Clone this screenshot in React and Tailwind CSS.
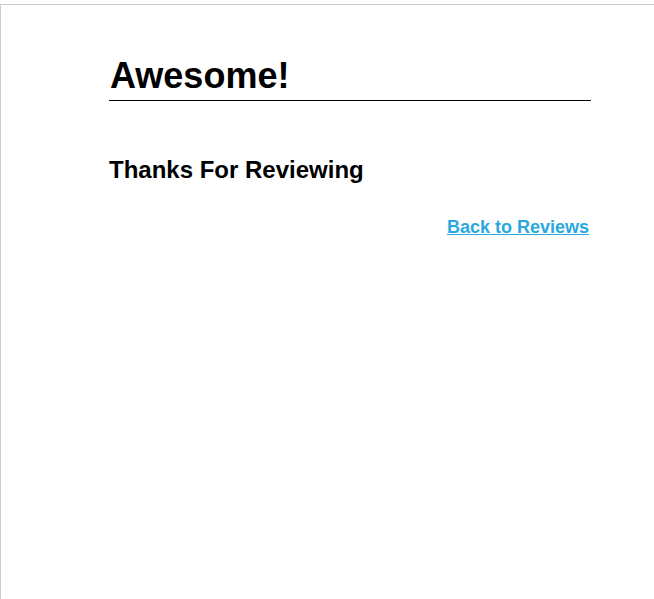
export default function App() {
    return (
        <div className="min-h-screen bg-white pt-[4px] font-['Liberation_Sans',Arial,sans-serif] text-black">
            <div className="min-h-[595px] border-t border-l border-[#cccccc] pt-[50px]">
                <div className="ml-[108px] w-[482px]">
                    <h1 className="border-b border-black pb-[4px] pl-[1px] text-[36px] font-bold leading-[1.15]">
                        Awesome!
                    </h1>
                    <h2 className="mt-[55px] text-[24px] font-bold leading-[1.15]">
                        Thanks For Reviewing
                    </h2>
                    <div className="mt-[32px] pr-[2px] text-right">
                        <a href="#" className="text-[18px] font-bold leading-[1.15] text-[#29a8e0] underline">
                            Back to Reviews
                        </a>
                    </div>
                </div>
            </div>
        </div>
    );
}
